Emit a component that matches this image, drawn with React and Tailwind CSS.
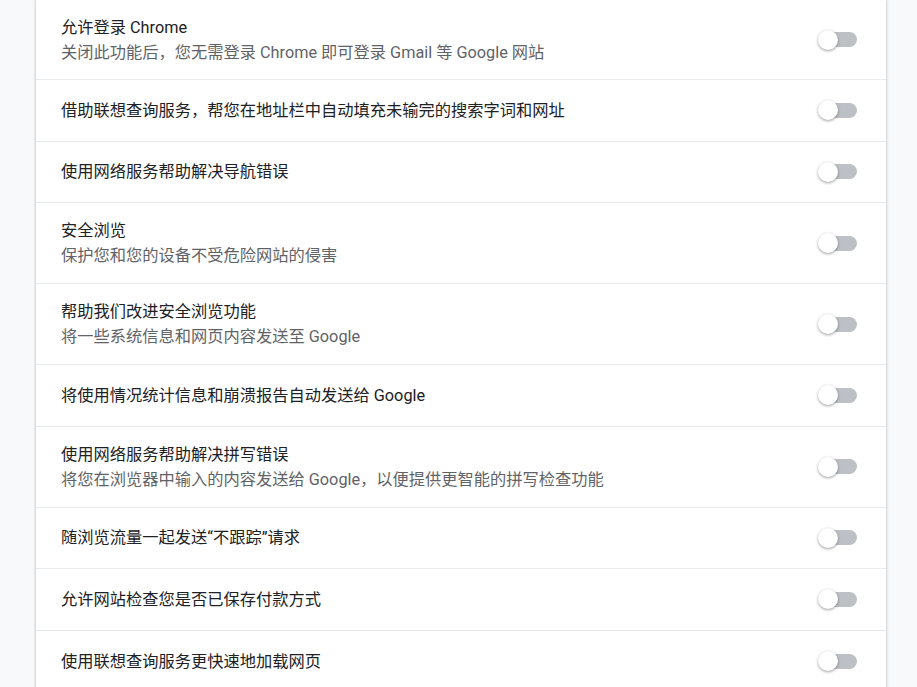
import { useState } from 'react'

const items = [
  { title: '允许登录 Chrome', sub: '关闭此功能后，您无需登录 Chrome 即可登录 Gmail 等 Google 网站', h: 'h-[80px]' },
  { title: '借助联想查询服务，帮您在地址栏中自动填充未输完的搜索字词和网址' },
  { title: '使用网络服务帮助解决导航错误' },
  { title: '安全浏览', sub: '保护您和您的设备不受危险网站的侵害' },
  { title: '帮助我们改进安全浏览功能', sub: '将一些系统信息和网页内容发送至 Google' },
  { title: '将使用情况统计信息和崩溃报告自动发送给 Google' },
  { title: '使用网络服务帮助解决拼写错误', sub: '将您在浏览器中输入的内容发送给 Google，以便提供更智能的拼写检查功能' },
  { title: '随浏览流量一起发送“不跟踪”请求' },
  { title: '允许网站检查您是否已保存付款方式' },
  { title: '使用联想查询服务更快速地加载网页' },
]

function Toggle({ on, onChange }) {
  return (
    <button
      onClick={onChange}
      className="relative w-[39px] h-[20px] shrink-0 flex items-center"
    >
      <span
        className={`absolute right-0 w-[35px] h-[15px] rounded-full ${on ? 'bg-[#a8c7fa]' : 'bg-[#bdc1c6]'}`}
      />
      <span
        className={`absolute top-0 w-[20px] h-[20px] rounded-full shadow-[0_1px_3px_rgba(0,0,0,0.4)] transition-all ${on ? 'left-[19px] bg-[#1a73e8]' : 'left-0 bg-white'}`}
      />
    </button>
  )
}

function Row({ item, last }) {
  const [on, setOn] = useState(false)
  const height = item.h || (item.sub ? 'h-[81px]' : 'h-[61.5px]')
  return (
    <div className={`flex items-center pl-[25px] pr-[29px] ${height} ${last ? '' : 'border-b border-[#e8eaed]'}`}>
      <div className="flex-1 flex flex-col">
        <div className="text-[#202124] leading-[25px]">{item.title}</div>
        {item.sub && <div className="text-[#5f6368] leading-[25px]">{item.sub}</div>}
      </div>
      <Toggle on={on} onChange={() => setOn(!on)} />
    </div>
  )
}

export default function App() {
  return (
    <div
      className="h-screen bg-[#f8f9fa] text-[16.25px] overflow-hidden"
      style={{ fontFamily: '"Segoe UI", Roboto, "Noto Sans CJK SC", sans-serif' }}
    >
      <div className="ml-[36px] w-[850px] bg-white shadow-[0_0_2px_rgba(60,64,67,0.3),0_1px_3px_1px_rgba(60,64,67,0.12)]">
        {items.map((item, i) => (
          <Row key={i} item={item} last={i === items.length - 1} />
        ))}
      </div>
    </div>
  )
}
